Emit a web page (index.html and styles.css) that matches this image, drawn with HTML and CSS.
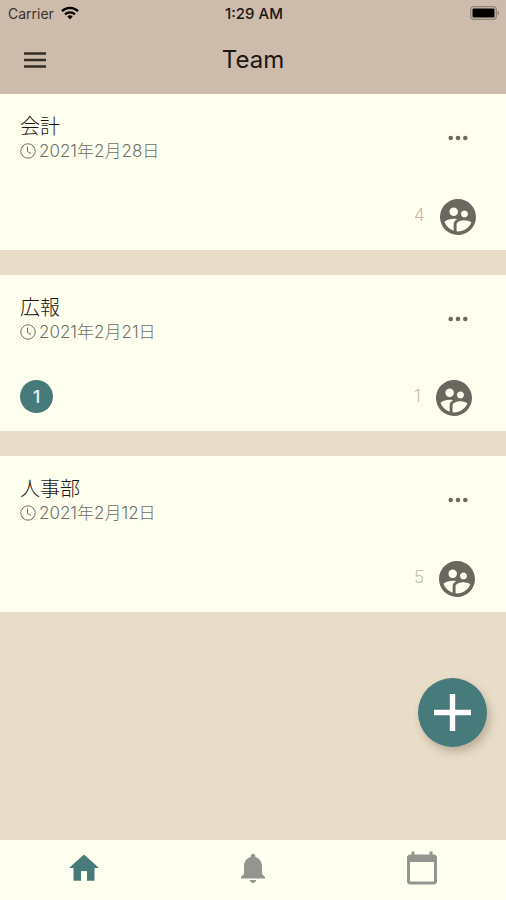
FILE: index.html
```html
<!DOCTYPE html>
<html lang="ja">
<head>
<meta charset="utf-8">
<meta name="viewport" content="width=device-width, initial-scale=1">
<title>Team</title>
<link rel="stylesheet" href="styles.css">
</head>
<body>
<svg class="defs" aria-hidden="true">
  <symbol id="clock" viewBox="0 0 16 16">
    <circle cx="8" cy="8" r="7.2" fill="none" stroke="currentColor"/>
    <path d="M7.5 3.5v5l3.5 2" fill="none" stroke="currentColor"/>
  </symbol>
  <symbol id="more" viewBox="0 0 20 6">
    <circle cx="2.7" cy="3" r="2.3"/><circle cx="10" cy="3" r="2.3"/><circle cx="17.3" cy="3" r="2.3"/>
  </symbol>
  <symbol id="members" viewBox="2 2 20 20">
    <path d="M11.99 2c-5.52 0-10 4.48-10 10s4.48 10 10 10 10-4.48 10-10-4.48-10-10-10zm3.61 6.34c1.07 0 1.93.86 1.93 1.93 0 1.07-.86 1.93-1.93 1.93-1.07 0-1.93-.86-1.93-1.93-.01-1.07.86-1.93 1.93-1.93zm-6-1.58c1.3 0 2.36 1.06 2.36 2.36 0 1.3-1.06 2.36-2.36 2.36s-2.36-1.06-2.36-2.36c0-1.31 1.05-2.36 2.36-2.36zm0 9.13v3.75c-2.4-.75-4.3-2.6-5.14-4.96 1.05-1.12 3.67-1.69 5.14-1.69.53 0 1.2.08 1.9.22-1.64.87-1.9 2.02-1.9 2.68zM11.99 20c-.27 0-.53-.01-.79-.04v-4.07c0-1.42 2.94-2.13 4.4-2.13 1.07 0 2.92.39 3.84 1.15-1.17 2.97-4.06 5.09-7.45 5.09z"/>
  </symbol>
</svg>
<header class="top">
  <div class="status">
    <div class="carrier">
      <span>Carrier</span>
      <svg class="wifi" viewBox="0 0 18 14" aria-hidden="true">
        <path d="M1 5.2a11.5 11.5 0 0 1 16 0M4 8.4a7.2 7.2 0 0 1 10 0" fill="none" stroke="currentColor" stroke-width="2.3"/>
        <path d="M9 13.4l-2.7-2.8a4 4 0 0 1 5.4 0z"/>
      </svg>
    </div>
    <time class="time">1:29 AM</time>
    <svg class="battery" viewBox="0 0 30 14" aria-hidden="true">
      <rect x="0.7" y="0.7" width="25.6" height="12.6" rx="3" fill="none" stroke="#8f8478" stroke-width="1.3"/>
      <rect x="2.5" y="2.5" width="22" height="9" rx="1"/>
      <path d="M27.6 4.5c2 .7 2 4.3 0 5z" fill="#8f8478"/>
    </svg>
  </div>
  <div class="bar">
    <button class="menu" type="button" aria-label="Menu">
      <svg viewBox="0 0 22 16" aria-hidden="true"><path d="M0 1.5h22M0 8h22M0 14.5h22" stroke="currentColor" stroke-width="2.4"/></svg>
    </button>
    <h1 class="title">Team</h1>
  </div>
</header>
<main class="content">
  <ul class="teams">
    <li class="team">
      <div class="row">
        <div>
          <h2 class="name">会計</h2>
          <p class="date"><svg class="clock" aria-hidden="true"><use href="#clock"/></svg><time datetime="2021-02-28">2021年2月28日</time></p>
        </div>
        <button class="more" type="button" aria-label="More"><svg aria-hidden="true"><use href="#more"/></svg></button>
      </div>
      <div class="row">
        <div class="members first"><span>4</span><svg aria-hidden="true"><use href="#members"/></svg></div>
      </div>
    </li>
    <li class="team">
      <div class="row">
        <div>
          <h2 class="name">広報</h2>
          <p class="date"><svg class="clock" aria-hidden="true"><use href="#clock"/></svg><time datetime="2021-02-21">2021年2月21日</time></p>
        </div>
        <button class="more" type="button" aria-label="More"><svg aria-hidden="true"><use href="#more"/></svg></button>
      </div>
      <div class="row">
        <span class="badge">1</span>
        <div class="members"><span>1</span><svg aria-hidden="true"><use href="#members"/></svg></div>
      </div>
    </li>
    <li class="team">
      <div class="row">
        <div>
          <h2 class="name">人事部</h2>
          <p class="date"><svg class="clock" aria-hidden="true"><use href="#clock"/></svg><time datetime="2021-02-12">2021年2月12日</time></p>
        </div>
        <button class="more" type="button" aria-label="More"><svg aria-hidden="true"><use href="#more"/></svg></button>
      </div>
      <div class="row">
        <div class="members"><span>5</span><svg aria-hidden="true"><use href="#members"/></svg></div>
      </div>
    </li>
  </ul>
  <button class="add" type="button" aria-label="Add team">
    <svg viewBox="0 0 37 37" aria-hidden="true"><path d="M18.5 0v37M0 18.5h37" stroke="currentColor" stroke-width="5.4"/></svg>
  </button>
</main>
<nav class="tabs">
  <a class="tab active" href="#home" aria-label="Home"><svg viewBox="0 0 24 24" aria-hidden="true"><path d="M10 20.500v-6.500h4v6.500h5v-8.500h3L12 3 2 12h3v8.500z"/></svg></a>
  <a class="tab" href="#notifications" aria-label="Notifications"><svg viewBox="0 0 24 24" aria-hidden="true"><path d="M12 22c1.100 0 2-.9 2-2h-4c0 1.100.89 2 2 2zm6-6v-5c0-3.070-1.640-5.640-4.500-6.320V4c0-.83-.67-1.500-1.500-1.500s-1.500.67-1.500 1.500v.68C7.630 5.360 6 7.920 6 11v5l-2 2v1h16v-1l-2-2z"/></svg></a>
  <a class="tab" href="#calendar" aria-label="Calendar"><svg viewBox="0 0 24 24" aria-hidden="true"><path d="M20 3h-1V1h-2v2H7V1H5v2H4c-1.100 0-2 .9-2 2v16c0 1.100.9 2 2 2h16c1.100 0 2-.9 2-2V5c0-1.100-.9-2-2-2zm0 18H4V8h16v13z"/></svg></a>
</nav>
</body>
</html>
```
FILE: styles.css
```css
* {
  box-sizing: border-box;
}

body {
  margin: 0;
  min-height: 100vh;
  display: flex;
  flex-direction: column;
  background: #e8ddc8;
  color: #1c1614;
  font-family: Inter, "Noto Sans CJK JP", sans-serif;
}

h1, h2, p, ul {
  margin: 0;
  padding: 0;
}

button {
  border: 0;
  padding: 0;
  background: none;
  color: inherit;
  font: inherit;
  cursor: pointer;
}

svg {
  display: block;
  fill: currentColor;
}

.defs {
  position: absolute;
  width: 0;
  height: 0;
}

.top {
  background: #cdbcab;
}

.status {
  display: grid;
  grid-template-columns: 1fr auto 1fr;
  align-items: center;
  height: 26px;
  padding: 0 6px 0 8px;
  font-size: 14px;
}

.carrier {
  display: flex;
  align-items: center;
  gap: 7px;
  color: #3a322c;
}

.wifi {
  width: 18px;
  height: 14px;
  color: #000;
}

.time {
  font-size: 15px;
  font-weight: 500;
}

.battery {
  width: 30px;
  height: 14px;
  justify-self: end;
  color: #000;
}

.bar {
  display: grid;
  grid-template-columns: 1fr auto 1fr;
  align-items: center;
  height: 68px;
  padding: 0 24px;
}

.menu {
  justify-self: start;
  color: #352c27;
}

.menu svg {
  width: 22px;
  height: 16px;
}

.title {
  font-size: 24px;
  font-weight: 400;
  line-height: 32px;
}

.content {
  position: relative;
  flex: 1;
}

.teams {
  display: grid;
  gap: 25px;
  list-style: none;
}

.team {
  display: flex;
  flex-direction: column;
  justify-content: space-between;
  min-height: 156px;
  padding: 21px 20px 15px;
  background: #fffff0;
}

.row {
  display: flex;
  justify-content: space-between;
  align-items: flex-start;
}

.name {
  font-size: 20px;
  font-weight: 300;
  line-height: 24px;
}

.date {
  display: flex;
  align-items: center;
  gap: 3px;
  color: #6f6f68;
  font-size: 17px;
  font-weight: 300;
  line-height: 24px;
}

.clock {
  width: 16px;
  height: 16px;
}

.more {
  padding: 20px 18px;
  color: #6b6b62;
}

.more svg {
  width: 20px;
  height: 6px;
}

.badge {
  display: grid;
  place-items: center;
  width: 33px;
  height: 33px;
  border-radius: 50%;
  background: #467a7b;
  color: #e4e8ee;
  font-size: 17px;
  font-weight: 600;
}

.members {
  display: flex;
  align-items: flex-start;
  gap: 15px;
  width: 72px;
  margin-left: auto;
  color: #68685f;
}

.members span {
  color: #c4bfb2;
  font-size: 17px;
  font-weight: 300;
  line-height: 32px;
}

.members.first span {
  color: #cdb4a6;
}

.members svg {
  width: 36px;
  height: 36px;
}

.add {
  position: absolute;
  right: 19px;
  bottom: 93px;
  display: grid;
  place-items: center;
  width: 69px;
  height: 69px;
  border-radius: 50%;
  background: #467a7b;
  color: #fff;
  box-shadow: 3px 5px 8px rgba(90, 70, 50, 0.3);
}

.add svg {
  width: 37px;
  height: 37px;
}

.tabs {
  display: flex;
  height: 60px;
  background: #fffff0;
}

.tab {
  flex: 1;
  display: grid;
  place-items: center;
  padding-bottom: 4px;
  color: #949490;
}

.tab.active {
  color: #467a7b;
}

.tab svg {
  width: 36px;
  height: 36px;
}
```
